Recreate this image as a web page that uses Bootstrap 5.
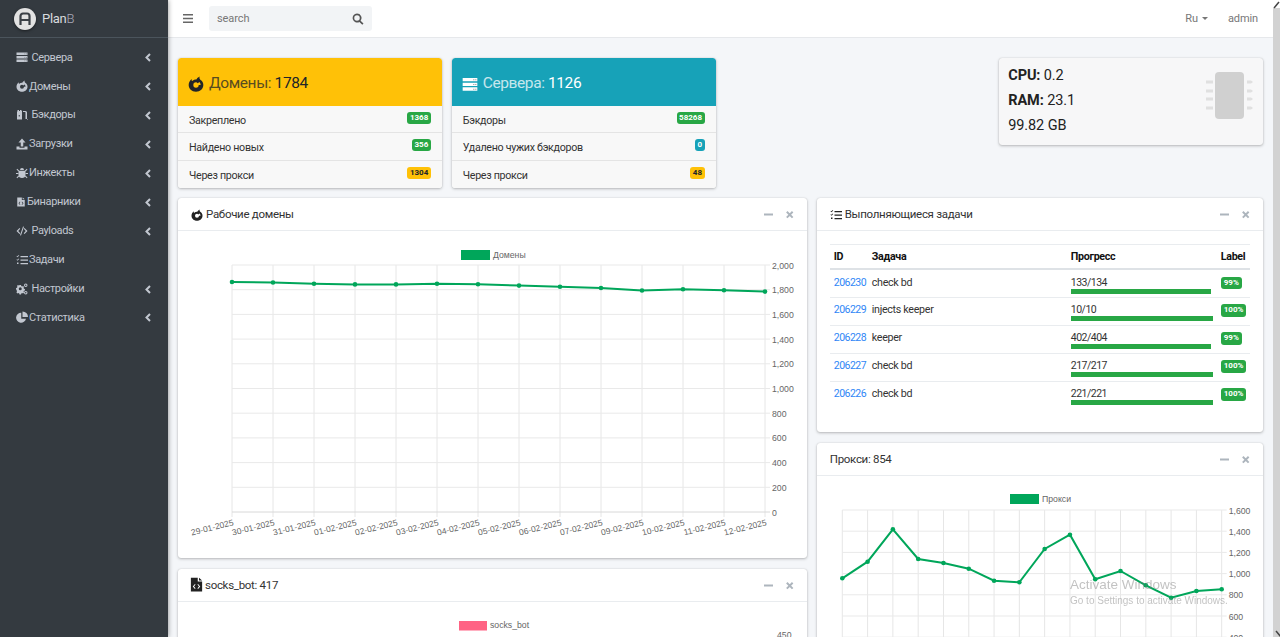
<!DOCTYPE html>
<html lang="ru"><head><meta charset="utf-8"><title>PlanB</title>
<link rel="stylesheet" href="https://cdn.jsdelivr.net/npm/bootstrap@5.3.0/dist/css/bootstrap.min.css">
<style>
html,body{height:637px;overflow:hidden}
body{font-family:Roboto,"Liberation Sans",sans-serif;font-size:10.7px;letter-spacing:-.3px;background:#f4f6f9;color:#212529}
.side{width:168px;background:#343a40;color:#c2c7d0;box-shadow:0 0 5px rgba(0,0,0,.45);z-index:3;flex:none}
.brandbar{height:38px;border-bottom:1px solid #4b545c;padding-left:14px;gap:6px;font-size:13px}
.brandbar b{font-weight:400;color:#d8dade}.brandbar i{font-style:normal;font-weight:300;color:#aab}
.logo{width:22px;height:22px;border-radius:50%;background:#e2e2e2;box-shadow:0 1px 3px rgba(0,0,0,.5)}
.sidemenu{padding-top:5px}
.sidemenu a{height:28.9px;padding:1px 16px 0;color:#c2c7d0;text-decoration:none;font-size:11px;letter-spacing:-.35px}
.sidemenu svg.ic{width:12px;height:12px;fill:#c2c7d0;flex:none;margin:-1px 1px 0 0}
.chev{margin-left:auto;width:6px;height:9px;margin-right:1px;stroke:#c2c7d0;fill:none;stroke-width:2}
.mainpane{width:1105px;flex:none;min-width:0}
.topbar{height:38px;background:#fff;border-bottom:1px solid #e6e8eb;padding:0 15px 0 15px;color:#777;flex:none;font-size:11px;letter-spacing:-.1px}
.burger{width:10px;height:9px;fill:#666;margin-right:16px}
.seek{width:163px;height:25px;background:#f2f4f6;border-radius:3px;padding:1px 8px 0;color:#777}
.seek svg{width:12px;height:12px;fill:#555;margin-left:auto;margin-right:0}
.caret-dn{width:0;height:0;border:3px solid transparent;border-top:3px solid #777;border-bottom:0;display:inline-block;margin-left:4px;vertical-align:2px}
.tb-r{gap:20px;padding-top:1px}
.fakebar{width:7px;background:#d2d2d2;flex:none;border-top:8px solid #fff}
.cursormark{position:fixed;width:7px;height:8px;z-index:9}
.cm-a{left:1273px;top:1px}.cm-b{left:1275px;top:630px}
.pagebody{padding:20px 10px 0;overflow:hidden;flex:1 1 auto;min-height:0}
.pagebody .row{--bs-gutter-x:10px;--bs-gutter-y:0}
.pan{background:#fff;border:0;border-radius:3px;box-shadow:0 0 1px rgba(0,0,0,.2),0 1px 3px rgba(0,0,0,.25)}
.stat{height:130px;margin-bottom:10px;overflow:hidden}
.stat-h{height:48px;padding:3px 10px 0;font-size:15.5px;letter-spacing:-.4px;gap:5px;border-radius:3px 3px 0 0}
.stat-h svg{width:16px;height:16px;fill:currentColor}
.stat-h .lbl{opacity:.75}
.hy{background:#ffc107;color:#212529}.hb{background:#17a2b8;color:#fff}
.stat .list-group-item{height:27.3px;padding:3px 11px 0;background:#f8f8f8;border-color:#e4e4e4;border-left:0;border-right:0;border-radius:0;color:#333;font-size:10.7px}
.stat .list-group-item:first-child{border-top:0}
.stat .list-group-item:last-child{border-bottom:0}
.tag{font-size:8px;font-weight:700;letter-spacing:0;padding:0 2.5px;height:12.5px;line-height:12.5px;border-radius:3px;color:#fff;margin-top:-5.5px}
.tg{background:#28a745}.ti{background:#17a2b8}.ty{background:#ffc107;color:#212529}
.cpu{height:87px;background:#f7f7f8;padding:6px 8px 0 9px;font-size:14.5px;line-height:24.8px;color:#222;margin-bottom:0;letter-spacing:-.1px}
.cpu b{font-weight:700}
.cpu svg{width:47px;height:48px;fill:#d0d0d0;margin:7px 2px 0 0}
.pan-h{height:33px;padding:1px 13px 0;border-bottom:1px solid #e9ecef;color:#333;font-size:11.5px;gap:3px;letter-spacing:-.3px}
.pan-h>svg.tt{width:12px;height:12px;fill:#222;flex:none}
.pan-h>svg.tall{width:15px;height:15px;margin:-3px -2px 0 -2px}
.tools{margin-left:auto;gap:12px;color:#adb5bd}
.tools svg{width:9px;height:9px;stroke:#adb5bd;stroke-width:2.200;fill:none;display:block}
.wcard{margin-bottom:11px;overflow:hidden}
.domains{height:360px}.tasks{height:234px}.prox{height:400px}.socks{height:200px}
.wcard svg.ch{display:block}
.taskbody{padding:13px 14px 0 13px}
.tbl{margin:0;font-size:10.7px;color:#333;table-layout:fixed;width:420px;line-height:13px}
.tbl th,.tbl td{padding:0 4px;border-color:#e9ecef;color:#333;background:transparent}
.tbl thead tr{height:24.5px}.tbl thead th{border-top:1px solid #e9ecef;border-bottom:2px solid #dee2e6;color:#111;font-weight:700;vertical-align:middle}
.tbl tbody tr{height:28px}.tbl td{vertical-align:top;padding-top:5.5px}
.tbl tbody tr:last-child td{border-bottom:0}
.tbl td.num{letter-spacing:-.5px;font-size:10.5px}
.tbl a{color:#2f86f6;text-decoration:none}
.tbl .progress{height:5px;border-radius:0;background:transparent;margin-top:0}
.tbl .progress-bar{background:#28a745}
.tbl td.lc,.tbl th.lc{padding-left:4px;padding-right:0}
.lb{display:block;width:fit-content;font-size:8px;font-weight:700;letter-spacing:0;color:#fff;background:#28a745;border-radius:3px;height:12.5px;line-height:12.5px;padding:0 3px;margin-top:1px}
.wm{position:fixed;left:1070px;top:576px;color:rgba(120,120,120,.45);pointer-events:none;z-index:9;font-family:"Liberation Sans",sans-serif;font-size:10px;line-height:13px;letter-spacing:0}
.wm div:first-child{font-size:13.5px;line-height:18px}
svg text{font-family:"Liberation Sans",sans-serif;font-size:8.7px;fill:#666;letter-spacing:0}
svg text.tk{font-size:8.5px}
</style></head><body>
<svg width="0" height="0" style="position:absolute"><defs>
<symbol id="i-server" viewBox="0 0 24 24"><path d="M1 3h22v5H1zM1 10h22v5H1zM1 17h22v5H1z"/><path fill="#343a40" d="M17 5h1.500v1.500H17zM20 5h1.500v1.500H20zM17 12h1.500v1.500H17zM20 12h1.500v1.500H20zM17 19h1.500v1.500H17zM20 19h1.500v1.500H20z" opacity=".6"/></symbol>
<symbol id="i-fox" viewBox="0 0 24 24"><path fill-rule="evenodd" d="M5.500 4.500C5.300 6 5.600 7 6 7.800 7.700 6 10 5.200 12.500 5.300 13.500 3.500 15 2 17.500.8c-.7 2 -.3 3.400 1 4.700C21.500 7.500 23 10.300 23 13.500 23 19 18.500 23.500 12 23.500S1 19 1 13.500C1 10 2.700 6.800 5.500 4.500zM12 9.500a4 4 0 1 0 4 4h3c0-1.800-.6-3.400-1.700-4.600L14.500 11c-.7-1-1.500-1.500-2.500-1.500z"/></symbol>
<symbol id="i-door" viewBox="0 0 24 24"><path d="M2 21V5h1V2h3v2h2V2h3v2h1v17zM7.500 12h-2v3h2z"/><path d="M14 4h5c2 0 3 1.500 3 3v14h2v-1h-5V7c0-.6-.4-1-1-1h-4z"/></symbol>
<symbol id="i-up" viewBox="0 0 24 24"><path d="M12 1l7 8h-4.500v8h-5V9H5zM1 17h6v2.500h10V17h6v6H1z"/></symbol>
<symbol id="i-bug" viewBox="0 0 24 24"><path d="M8 6a4 4 0 0 1 8 0zM6.500 7.500h11c1 0 1.500.8 1.500 1.500v7c0 3.500-3 6-7 6s-7-2.500-7-6V9c0-.7.5-1.500 1.500-1.500z"/><path d="M0 12h5v2H0zM19 12h5v2h-5zM1 5l1.500-1.500 4 4L5 9zM23 5l-1.500-1.500-4 4L19 9zM1 21l4-4 1.500 1.500-4 4zM23 21l-4-4-1.500 1.500 4 4z"/></symbol>
<symbol id="i-file" viewBox="0 0 24 24"><path fill-rule="evenodd" d="M3 1h11v6h7v16H3zM16 1l5 4.500h-5zM9.500 11l-3.500 4 3.500 4 1-1-2.500-3 2.500-3zM14.500 11l-1 1 2.500 3-2.500 3 1 1 3.500-4z"/></symbol>
<symbol id="i-code" viewBox="0 0 24 24"><path d="M7 6l1.500 1.500L4.500 12l4 4.500L7 18l-6-6zM17 6l-1.500 1.500 4 4.500-4 4.500L17 18l6-6zM14 3l2 .6L10 21l-2-.6z"/></symbol>
<symbol id="i-tasks" viewBox="0 0 24 24"><path d="M9 4h15v2.500H9zM9 11h15v2.500H9zM9 18h15v2.500H9zM1 4.500l1-1 1 1 2.500-2.500 1 1L3 6.500zM1 11.500l1-1 1 1 2.500-2.500 1 1L3 13.500zM2 17h3v3H2z"/></symbol>
<symbol id="i-cog" viewBox="0 0 24 24"><path fill-rule="evenodd" d="M7 5h3l.5 2 1.800.8 1.800-1 2 2-1 1.800.8 1.800 2 .5v3l-2 .5-.8 1.800 1 1.800-2 2-1.800-1-1.800.8-.5 2H7l-.5-2-1.800-.8-1.800 1-2-2 1-1.800L1.100 14.400l-1-.4v-3l2-.5.8-1.800-1-1.800 2-2 1.800 1 1.800-.8zM8.500 9.500a3 3 0 1 0 0 6 3 3 0 0 0 0-6z" transform="translate(0 -1)"/><path fill-rule="evenodd" d="M19.500 1a3 3 0 1 1 0 7 3 3 0 0 1 0-7zm0 2a1.500 1.500 0 1 0 0 3 1.500 1.500 0 0 0 0-3zM19.500 16a3 3 0 1 1 0 7 3 3 0 0 1 0-7zm0 2a1.500 1.500 0 1 0 0 3 1.500 1.500 0 0 0 0-3z"/></symbol>
<symbol id="i-pie" viewBox="0 0 24 24"><path d="M10.500 3.500A10 10 0 1 0 20 15.500H10.500zM13 1v11h11A11 11 0 0 0 13 1z"/></symbol>
<symbol id="i-search" viewBox="0 0 24 24"><path fill-rule="evenodd" d="M10 1a9 9 0 0 1 7.200 14.400l5.800 5.800-2.400 2.400-5.800-5.800A9 9 0 1 1 10 1zm0 3.500a5.500 5.500 0 1 0 0 11 5.500 5.500 0 0 0 0-11z"/></symbol>
<symbol id="i-min" viewBox="0 0 10 10"><path d="M-1 5h11"/></symbol>
<symbol id="i-x" viewBox="0 0 10 10"><path d="M2 2l6.500 6.500M8.500 2L2 8.500"/></symbol>
<symbol id="i-chev" viewBox="0 0 6 9"><path d="M5 1L1.500 4.500 5 8"/></symbol>
</defs></svg>

<div class="d-flex" style="height:637px">
<aside class="side">
  <div class="brandbar d-flex align-items-center">
    <span class="logo d-flex align-items-center justify-content-center"><svg width="14" height="14" viewBox="0 0 14 14"><path fill="none" stroke="#3a3f45" stroke-width="2.200" d="M2.500 13V4a2.500 2.500 0 0 1 2.500-2.500h4A2.500 2.500 0 0 1 11.500 4v9M2.500 8h9"/></svg></span>
    <span><b>Plan</b><i>B</i></span>
  </div>
  <nav class="sidemenu d-flex flex-column">
    <a class="d-flex align-items-center" href="#"><svg class="ic"><use href="#i-server"/></svg>&nbsp;Сервера<svg class="chev"><use href="#i-chev"/></svg></a>
    <a class="d-flex align-items-center" href="#"><svg class="ic"><use href="#i-fox"/></svg>Домены<svg class="chev"><use href="#i-chev"/></svg></a>
    <a class="d-flex align-items-center" href="#"><svg class="ic"><use href="#i-door"/></svg>&nbsp;Бэкдоры<svg class="chev"><use href="#i-chev"/></svg></a>
    <a class="d-flex align-items-center" href="#"><svg class="ic"><use href="#i-up"/></svg>Загрузки<svg class="chev"><use href="#i-chev"/></svg></a>
    <a class="d-flex align-items-center" href="#"><svg class="ic"><use href="#i-bug"/></svg>Инжекты<svg class="chev"><use href="#i-chev"/></svg></a>
    <a class="d-flex align-items-center" href="#"><svg class="ic" style="width:10px"><use href="#i-file"/></svg>Бинарники<svg class="chev"><use href="#i-chev"/></svg></a>
    <a class="d-flex align-items-center" href="#"><svg class="ic"><use href="#i-code"/></svg>&nbsp;Payloads<svg class="chev"><use href="#i-chev"/></svg></a>
    <a class="d-flex align-items-center" href="#"><svg class="ic"><use href="#i-tasks"/></svg>Задачи</a>
    <a class="d-flex align-items-center" href="#"><svg class="ic"><use href="#i-cog"/></svg>&nbsp;Настройки<svg class="chev"><use href="#i-chev"/></svg></a>
    <a class="d-flex align-items-center" href="#"><svg class="ic"><use href="#i-pie"/></svg>Статистика<svg class="chev"><use href="#i-chev"/></svg></a>
  </nav>
</aside>
<main class="mainpane d-flex flex-column">
  <header class="topbar d-flex align-items-center">
    <svg class="burger" viewBox="0 0 10 9"><path d="M0 0h10v1.500H0zM0 3.700h10v1.500H0zM0 7.500h10V9H0z"/></svg>
    <div class="seek d-flex align-items-center">search<svg><use href="#i-search"/></svg></div>
    <div class="tb-r d-flex ms-auto"><span>Ru<span class="caret-dn"></span></span><span>admin</span></div>
  </header>
  <div class="pagebody">
    <div class="row">
      <div class="col-3"><div class="pan stat">
        <div class="stat-h hy d-flex align-items-center"><svg><use href="#i-fox"/></svg><span><span class="lbl">Домены:</span> 1784</span></div>
        <ul class="list-group list-group-flush">
          <li class="list-group-item d-flex align-items-center justify-content-between">Закреплено<span class="tag tg">1368</span></li>
          <li class="list-group-item d-flex align-items-center justify-content-between">Найдено новых<span class="tag tg">356</span></li>
          <li class="list-group-item d-flex align-items-center justify-content-between">Через прокси<span class="tag ty">1304</span></li>
        </ul></div></div>
      <div class="col-3"><div class="pan stat">
        <div class="stat-h hb d-flex align-items-center"><svg><use href="#i-server"/></svg><span><span class="lbl">Сервера:</span> 1126</span></div>
        <ul class="list-group list-group-flush">
          <li class="list-group-item d-flex align-items-center justify-content-between">Бэкдоры<span class="tag tg">58268</span></li>
          <li class="list-group-item d-flex align-items-center justify-content-between">Удалено чужих бэкдоров<span class="tag ti">0</span></li>
          <li class="list-group-item d-flex align-items-center justify-content-between">Через прокси<span class="tag ty">48</span></li>
        </ul></div></div>
      <div class="col-3 offset-3"><div class="pan cpu d-flex justify-content-between">
        <div><div><b>CPU:</b> 0.2</div><div><b>RAM:</b> 23.1</div><div>99.82 GB</div></div>
        <svg viewBox="0 0 47 48"><rect x="9" y="1" width="29" height="47" rx="4"/><path fill="#e0e0e0" d="M0 9.500h7v3H0zM0 18.500h7v3H0zM0 26.500h7v3H0zM0 35.500h7v3H0zM41 9.500h4l2 1.500-2 1.500h-4zM41 18.500h4l2 1.500-2 1.500h-4zM41 26.500h4l2 1.500-2 1.500h-4zM41 35.500h4l2 1.500-2 1.500h-4z"/></svg>
      </div></div>
    </div>
    <div class="row">
      <div class="col-7">
        <section class="pan wcard domains">
          <div class="pan-h d-flex align-items-center"><svg class="tt"><use href="#i-fox"/></svg>Рабочие домены<div class="tools d-flex"><svg><use href="#i-min"/></svg><svg><use href="#i-x"/></svg></div></div>
          <svg class="ch" id="c1" width="629" height="326" viewBox="178 232 629 326"></svg>
        </section>
        <section class="pan wcard socks">
          <div class="pan-h d-flex align-items-center"><svg class="tt tall"><use href="#i-file"/></svg>socks_bot: 417<div class="tools d-flex"><svg><use href="#i-min"/></svg><svg><use href="#i-x"/></svg></div></div>
          <svg class="ch" width="629" height="160" viewBox="178 603 629 160"><rect x="459" y="622" width="28" height="9.500" fill="#ff6384"/><text x="490" y="629">socks_bot</text><text x="777" y="639">450</text></svg>
        </section>
      </div>
      <div class="col-5">
        <section class="pan wcard tasks">
          <div class="pan-h d-flex align-items-center"><svg class="tt"><use href="#i-tasks"/></svg>Выполняющиеся задачи<div class="tools d-flex"><svg><use href="#i-min"/></svg><svg><use href="#i-x"/></svg></div></div>
          <div class="taskbody">
            <table class="table tbl">
              <colgroup><col style="width:38px"><col style="width:199px"><col style="width:150px"><col></colgroup>
              <thead><tr><th>ID</th><th>Задача</th><th>Прогресс</th><th class="lc">Label</th></tr></thead>
              <tbody>
                <tr><td class="num"><a href="#">206230</a></td><td>check bd</td><td class="num">133/134<div class="progress"><div class="progress-bar" style="width:99%"></div></div></td><td class="lc"><span class="lb">99%</span></td></tr>
                <tr><td class="num"><a href="#">206229</a></td><td>injects keeper</td><td class="num">10/10<div class="progress"><div class="progress-bar" style="width:100%"></div></div></td><td class="lc"><span class="lb">100%</span></td></tr>
                <tr><td class="num"><a href="#">206228</a></td><td>keeper</td><td class="num">402/404<div class="progress"><div class="progress-bar" style="width:99%"></div></div></td><td class="lc"><span class="lb">99%</span></td></tr>
                <tr><td class="num"><a href="#">206227</a></td><td>check bd</td><td class="num">217/217<div class="progress"><div class="progress-bar" style="width:100%"></div></div></td><td class="lc"><span class="lb">100%</span></td></tr>
                <tr><td class="num"><a href="#">206226</a></td><td>check bd</td><td class="num">221/221<div class="progress"><div class="progress-bar" style="width:100%"></div></div></td><td class="lc"><span class="lb">100%</span></td></tr>
              </tbody>
            </table>
          </div>
        </section>
        <section class="pan wcard prox">
          <div class="pan-h d-flex align-items-center">Прокси: 854<div class="tools d-flex"><svg><use href="#i-min"/></svg><svg><use href="#i-x"/></svg></div></div>
          <svg class="ch" id="c2" width="447" height="200" viewBox="817 476 447 200"></svg>
        </section>
      </div>
    </div>
  </div>
</main>
<div class="fakebar"></div>
</div>
<svg class="cursormark cm-a" viewBox="0 0 7 8"><path d="M1 7L6 1" stroke="#444" stroke-width="1.500"/></svg>
<svg class="cursormark cm-b" viewBox="0 0 7 8"><path d="M1 1L6 7" stroke="#444" stroke-width="1.500"/></svg>
<div class="wm"><div>Activate Windows</div><div>Go to Settings to activate Windows.</div></div>
<script>
function build(id,o){
  var s='',i;
  for(i=0;i<o.n;i++){var x=o.x0+i*(o.x1-o.x0)/(o.n-1);
    s+='<line x1="'+x+'" x2="'+x+'" y1="'+o.yt+'" y2="'+(o.yb+(o.ticks?5:0))+'" stroke="#e6e6e6"/>';
    if(o.ticks)s+='<text class="tk" transform="translate('+(x+2)+' '+(o.yb+13)+') rotate(-14)" text-anchor="end">'+o.ticks[i]+'</text>';
  }
  o.ys.forEach(function(l){
    s+='<line x1="'+o.x0+'" x2="'+(o.x1+5)+'" y1="'+l[0]+'" y2="'+l[0]+'" stroke="'+(l[1]=="0"?'#d8d8d8':'#e9e9e9')+'"/>';
    s+='<text x="'+(o.x1+7)+'" y="'+(l[0]+3.500)+'">'+l[1]+'</text>';
  });
  var p=o.pts.map(function(y,i){return [o.x0+i*(o.x1-o.x0)/(o.n-1),y]});
  s+='<polyline fill="none" stroke="#00a65a" stroke-width="2" points="'+p.map(function(a){return a.join(',')}).join(' ')+'"/>';
  p.forEach(function(a){s+='<circle cx="'+a[0]+'" cy="'+a[1]+'" r="2.300" fill="#00a65a"/>'});
  s+='<rect x="'+o.lx+'" y="'+o.ly+'" width="29" height="10" fill="#00a65a"/><text x="'+(o.lx+32)+'" y="'+(o.ly+7.500)+'">'+o.lt+'</text>';
  document.getElementById(id).innerHTML=s;
}
var d1=[];for(var v=2000;v>=0;v-=200)d1.push([266+(2000-v)*0.1235,v.toLocaleString('en-US')]);
build('c1',{n:14,x0:232,x1:765,yt:266,yb:513,ys:d1,lx:461,ly:251,lt:'Домены',
 pts:[283,283.5,284.700,285.400,285.400,284.700,285.300,286.600,287.800,289,291.500,290.300,291.300,292.600],
 ticks:['29-01-2025','30-01-2025','31-01-2025','01-02-2025','02-02-2025','03-02-2025','04-02-2025','05-02-2025','06-02-2025','07-02-2025','09-02-2025','10-02-2025','11-02-2025','12-02-2025']});
var d2=[];for(var w=1600;w>=400;w-=200)d2.push([510+(1600-w)*0.106,w.toLocaleString('en-US')]);
build('c2',{n:16,x0:842.3,x1:1221.7,yt:510,yb:650,ys:d2,lx:1010,ly:494,lt:'Прокси',
 pts:[578.300,561.700,529.300,559,563,568.700,580.700,582.300,549,534.700,579.300,571,585.300,597.700,591,589.300]});
</script>
</body></html>
